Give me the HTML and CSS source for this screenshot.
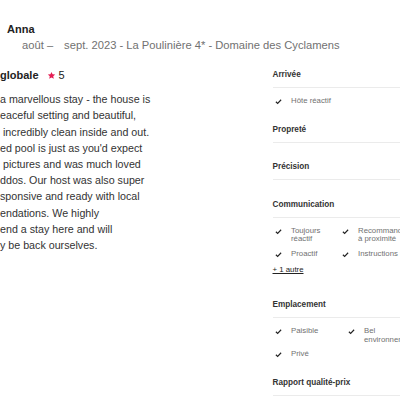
FILE: index.html
```html
<!DOCTYPE html>
<html lang="fr">
<head>
    <meta charset="UTF-8">
    <meta name="viewport" content="width=device-width, initial-scale=1.0">
    <title>Avis - Anna</title>
    <link rel="stylesheet" href="styles.css">
</head>
<body>
    <div class="page">
        <div class="reviewer">
            <div class="name">Anna</div>
            <div class="stay-date">août –<span class="stay-place">sept. 2023 - La Poulinière 4* - Domaine des Cyclamens</span></div>
        </div>
        <div class="content">
            <div class="review">
                <div class="overall">globale
                    <svg class="star" viewBox="0 0 24 24"><path d="M12 2.5l2.9 6.3 6.9.7-5.2 4.6 1.5 6.8L12 17.4l-6.1 3.5 1.5-6.8L2.2 9.5l6.9-.7z"/></svg>
                    <span>5</span>
                </div>
                <div class="review-text">
                    <div class="line">a marvellous stay - the house is</div>
                    <div class="line">eaceful setting and beautiful,</div>
                    <div class="line"> incredibly clean inside and out.</div>
                    <div class="line">ed pool is just as you'd expect</div>
                    <div class="line"> pictures and was much loved</div>
                    <div class="line">ddos. Our host was also super</div>
                    <div class="line">sponsive and ready with local</div>
                    <div class="line">endations. We highly</div>
                    <div class="line">end a stay here and will</div>
                    <div class="line">y be back ourselves.</div>
                </div>
            </div>
            <div class="ratings">
                <div class="section">
                    <div class="section-title">Arrivée</div>
                    <div class="tags">
                        <div class="tag"><svg class="check" viewBox="0 0 8 8"><path d="M1 4.3l2 1.9L7 2"/></svg><span>Hôte réactif</span></div>
                    </div>
                </div>
                <div class="section">
                    <div class="section-title">Propreté</div>
                </div>
                <div class="section">
                    <div class="section-title">Précision</div>
                </div>
                <div class="section">
                    <div class="section-title">Communication</div>
                    <div class="tags tags-comm">
                        <div class="tag"><svg class="check" viewBox="0 0 8 8"><path d="M1 4.3l2 1.9L7 2"/></svg><span>Toujours réactif</span></div>
                        <div class="tag"><svg class="check" viewBox="0 0 8 8"><path d="M1 4.3l2 1.9L7 2"/></svg><span>Recommandations à proximité</span></div>
                        <div class="tag"><svg class="check" viewBox="0 0 8 8"><path d="M1 4.3l2 1.9L7 2"/></svg><span>Proactif</span></div>
                        <div class="tag"><svg class="check" viewBox="0 0 8 8"><path d="M1 4.3l2 1.9L7 2"/></svg><span>Instructions utiles</span></div>
                    </div>
                    <a class="more" href="#">+ 1 autre</a>
                </div>
                <div class="section">
                    <div class="section-title">Emplacement</div>
                    <div class="tags tags-place">
                        <div class="tag"><svg class="check" viewBox="0 0 8 8"><path d="M1 4.3l2 1.9L7 2"/></svg><span>Paisible</span></div>
                        <div class="tag"><svg class="check" viewBox="0 0 8 8"><path d="M1 4.3l2 1.9L7 2"/></svg><span>Bel environnement</span></div>
                        <div class="tag"><svg class="check" viewBox="0 0 8 8"><path d="M1 4.3l2 1.9L7 2"/></svg><span>Privé</span></div>
                    </div>
                </div>
                <div class="section">
                    <div class="section-title">Rapport qualité-prix</div>
                </div>
            </div>
        </div>
    </div>
</body>
</html>
```

FILE: styles.css
```css
html, body {
    margin: 0;
    background: #fff;
    overflow: hidden;
}
body {
    font-family: 'Liberation Sans', Arial, sans-serif;
    color: #222;
}
.page {
    width: 400px;
    height: 400px;
    overflow: hidden;
}
.reviewer {
    padding: 23px 0 0 7px;
}
.name {
    font-size: 11px;
    line-height: 13px;
    font-weight: bold;
    color: #222;
}
.stay-date {
    margin-top: 2.5px;
    padding-left: 15px;
    font-size: 11.2px;
    line-height: 12px;
    color: #717171;
    white-space: nowrap;
}
.stay-place {
    margin-left: 11px;
}
.content {
    display: flex;
    gap: 17.5px;
    margin-top: 18px;
}
.review {
    flex: 0 0 255px;
}
.overall {
    display: flex;
    align-items: center;
    font-size: 11px;
    line-height: 13px;
    font-weight: bold;
    color: #222;
}
.overall span {
    font-weight: normal;
}
.star {
    width: 9px;
    height: 9px;
    margin: 0 3px 0 8px;
    fill: #e51d53;
}
.review-text {
    margin-top: 9.7px;
    font-size: 10.7px;
    line-height: 16.2px;
    color: #333;
}
.line {
    white-space: pre;
}
.ratings {
    flex: 0 0 170px;
}
.section {
    margin-bottom: 18.5px;
}
.section-title {
    font-size: 8.2px;
    line-height: 12px;
    font-weight: bold;
    color: #333;
    padding-bottom: 6px;
    border-bottom: 1px solid #ebebeb;
}
.tags {
    display: grid;
    grid-template-columns: 100%;
    row-gap: 6px;
    padding-top: 9px;
}
.tags-comm {
    grid-template-columns: 67px 84px;
}
.tags-place {
    grid-template-columns: 73px 74px;
}
.tag {
    display: flex;
    align-items: flex-start;
    font-size: 7.8px;
    line-height: 8.5px;
    color: #717171;
}
.check {
    flex: 0 0 7px;
    width: 7px;
    height: 7px;
    margin: 1px 9.5px 0 2px;
    fill: none;
    stroke: #222;
    stroke-width: 1.3;
}
.more {
    display: inline-block;
    margin-top: 6px;
    margin-bottom: 6px;
    font-size: 7.8px;
    line-height: 8.5px;
    color: #222;
    text-decoration: underline;
}
```
